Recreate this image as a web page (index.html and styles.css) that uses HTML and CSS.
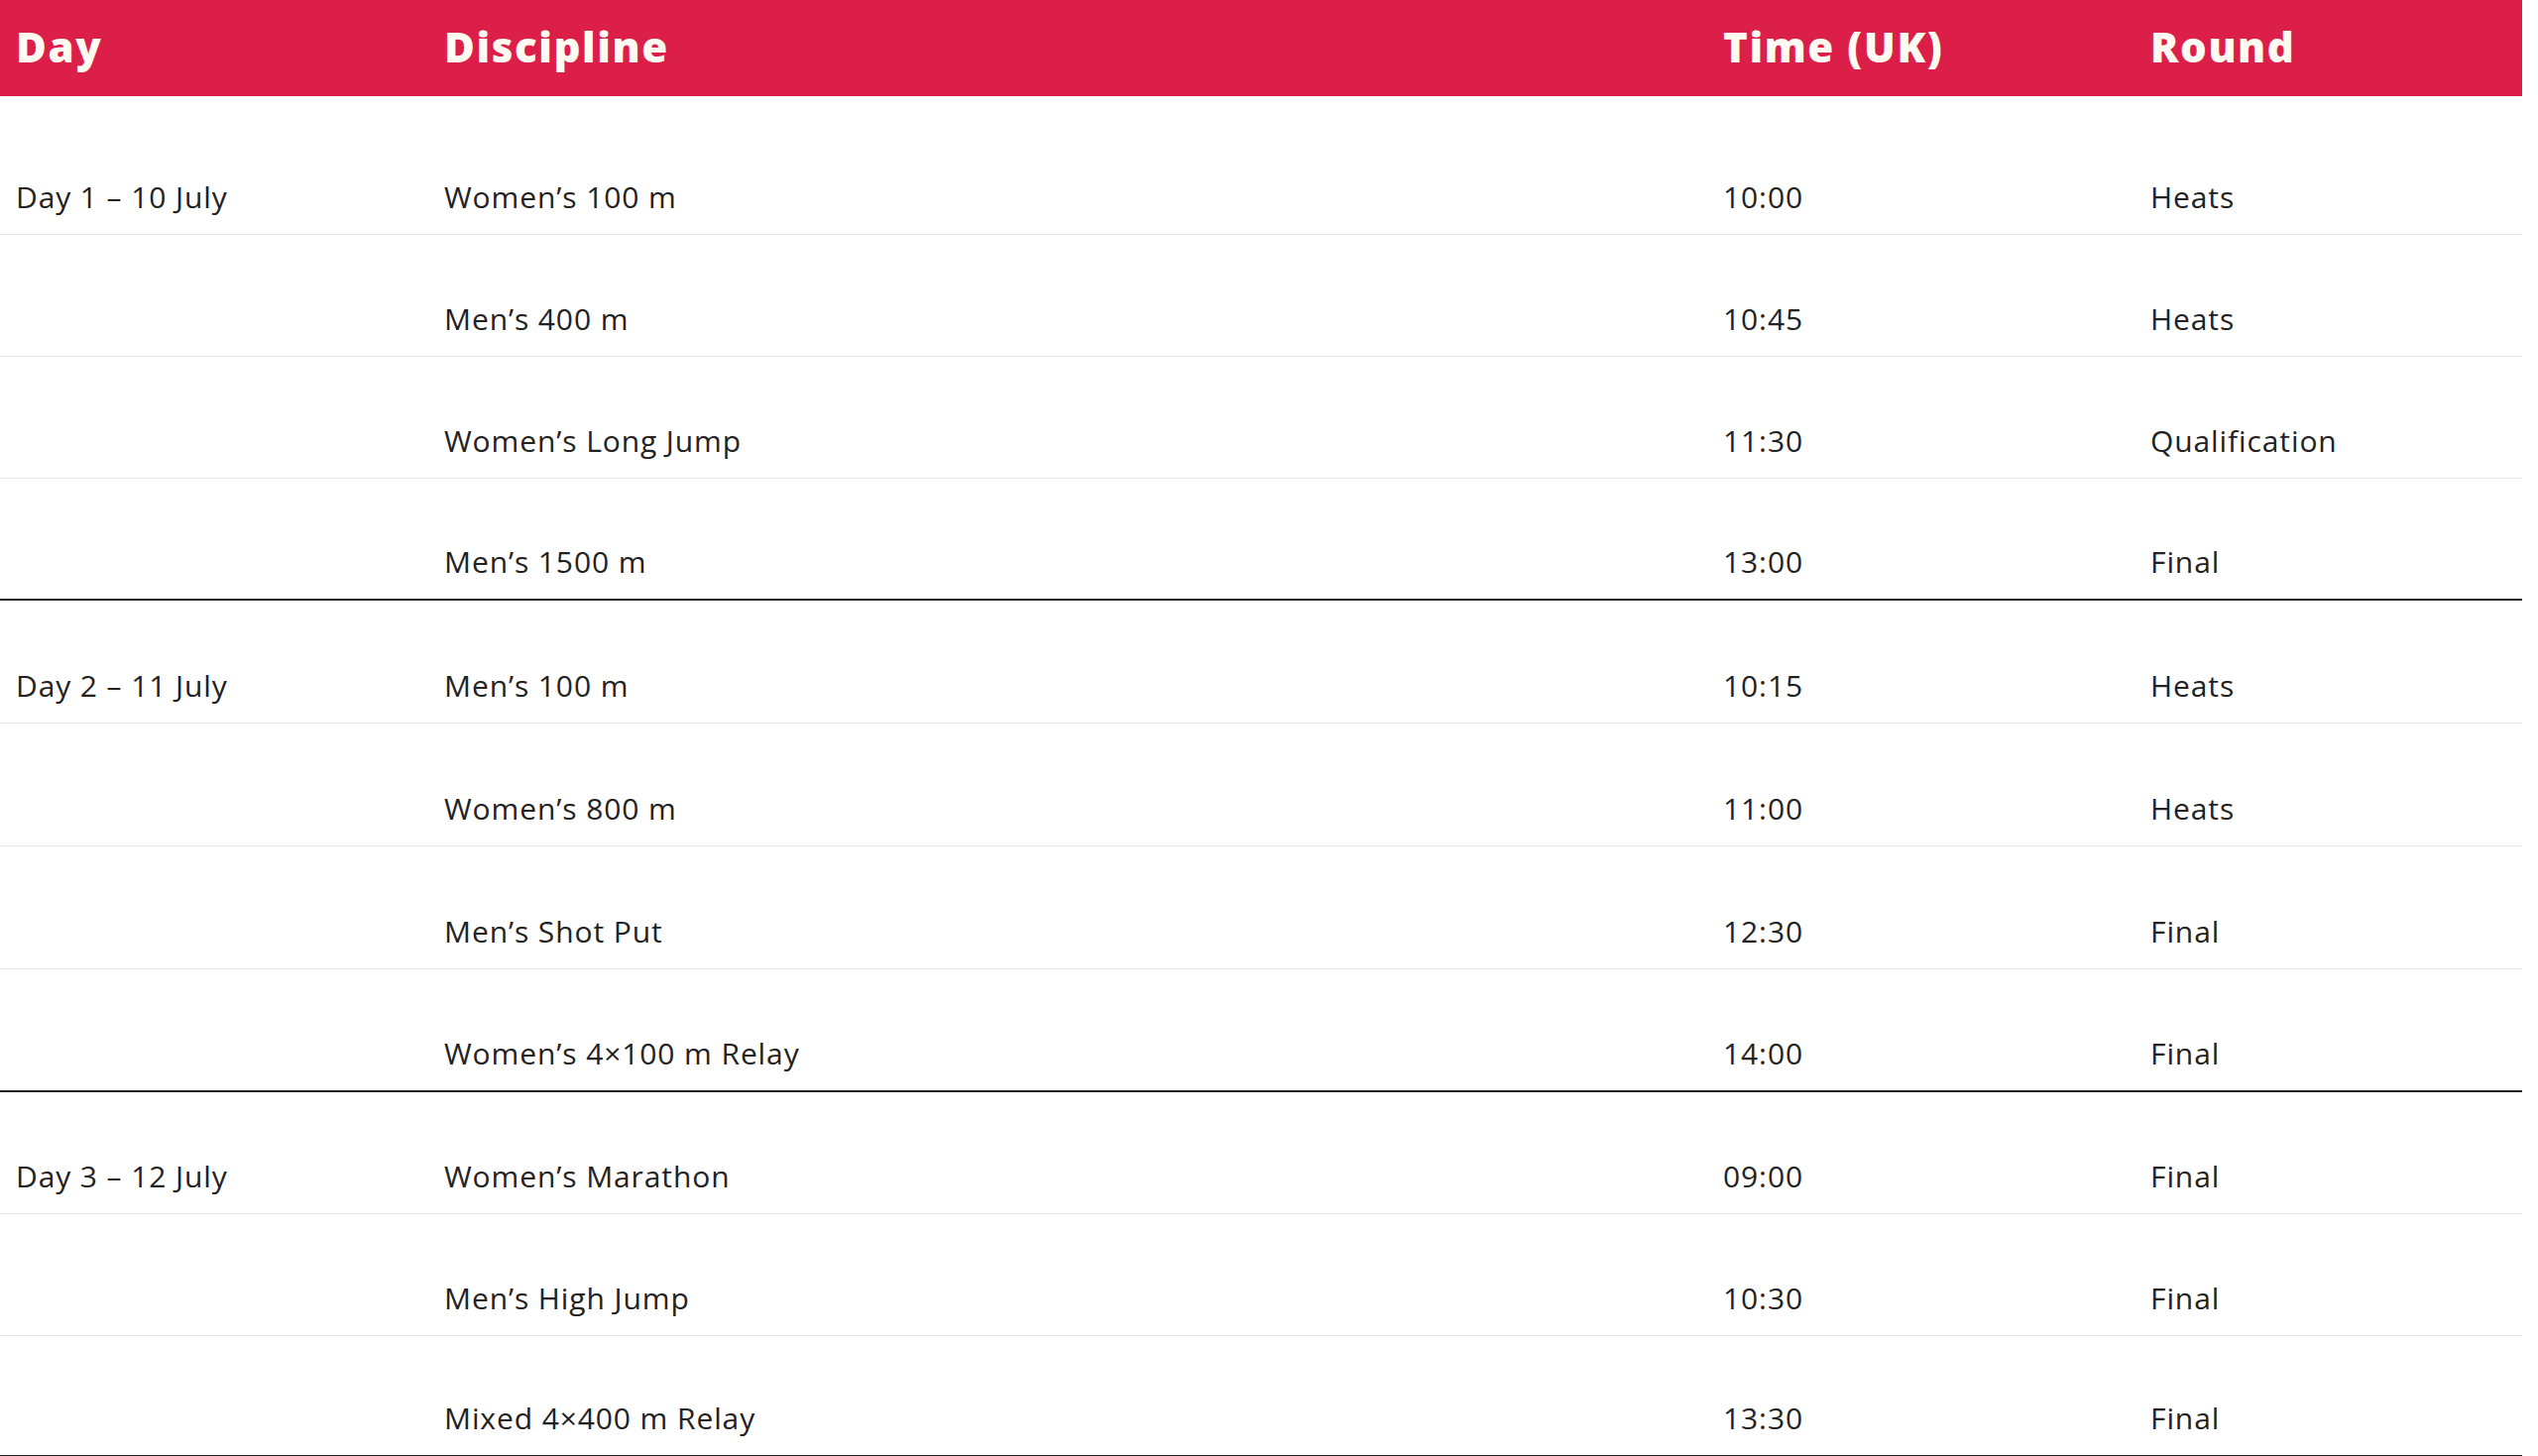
FILE: index.html
```html
<!DOCTYPE html>
<html lang="en">
<head>
<meta charset="utf-8">
<title>Schedule</title>
<link rel="stylesheet" href="styles.css">
</head>
<body>
<table class="schedule">
  <colgroup>
    <col class="c-day"><col class="c-disc"><col class="c-time"><col class="c-round">
  </colgroup>
  <thead>
    <tr><th>Day</th><th>Discipline</th><th>Time (UK)</th><th>Round</th></tr>
  </thead>
  <tbody class="group first">
    <tr><td>Day 1 – 10 July</td><td>Women’s 100 m</td><td>10:00</td><td>Heats</td></tr>
    <tr><td></td><td>Men’s 400 m</td><td>10:45</td><td>Heats</td></tr>
    <tr><td></td><td>Women’s Long Jump</td><td>11:30</td><td>Qualification</td></tr>
    <tr><td></td><td>Men’s 1500 m</td><td>13:00</td><td>Final</td></tr>
  </tbody>
  <tbody class="group mid">
    <tr><td>Day 2 – 11 July</td><td>Men’s 100 m</td><td>10:15</td><td>Heats</td></tr>
    <tr><td></td><td>Women’s 800 m</td><td>11:00</td><td>Heats</td></tr>
    <tr><td></td><td>Men’s Shot Put</td><td>12:30</td><td>Final</td></tr>
    <tr><td></td><td>Women’s 4×100 m Relay</td><td>14:00</td><td>Final</td></tr>
  </tbody>
  <tbody class="group last">
    <tr><td>Day 3 – 12 July</td><td>Women’s Marathon</td><td>09:00</td><td>Final</td></tr>
    <tr><td></td><td>Men’s High Jump</td><td>10:30</td><td>Final</td></tr>
    <tr><td></td><td>Mixed 4×400 m Relay</td><td>13:30</td><td>Final</td></tr>
  </tbody>
</table>
</body>
</html>
```

FILE: styles.css
```css
html, body {
  margin: 0;
  padding: 0;
  background: #ffffff;
}

body {
  font-family: "Open Sans", Lato, "Liberation Sans", sans-serif;
  color: #222222;
}

.schedule {
  width: 2544px;
  border-collapse: collapse;
  table-layout: fixed;
}

.c-day { width: 432px; }
.c-disc { width: 1290px; }
.c-time { width: 431px; }
.c-round { width: 391px; }

.schedule th {
  background: #dc1f48;
  color: #fffaf2;
  font-weight: 800;
  font-size: 42px;
  letter-spacing: 1.6px;
  text-align: left;
  height: 97px;
  padding: 0 16px 4px;
  vertical-align: middle;
  box-sizing: border-box;
}

.schedule td {
  font-size: 30px;
  letter-spacing: 0.9px;
  line-height: 36px;
  height: 123px;
  padding: 0 16px 19px;
  vertical-align: bottom;
  box-sizing: border-box;
  border-bottom: 1px solid #e6e6e6;
}

.schedule .first tr:first-child td {
  height: 139px;
}

.schedule .mid td {
  height: 124px;
}

.schedule .last tr:last-child td {
  height: 122px;
}

.schedule .group tr:last-child td {
  border-bottom: 2px solid #222222;
}
```
